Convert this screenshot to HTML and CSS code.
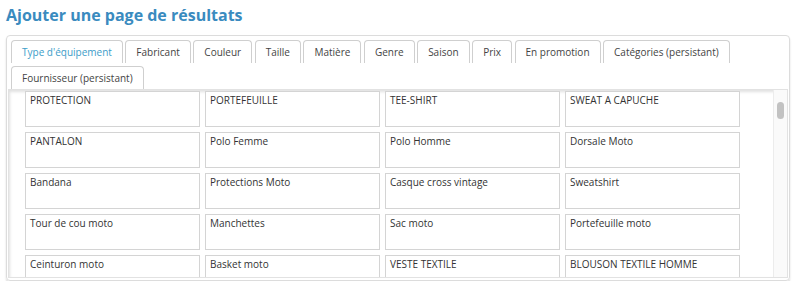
FILE: index.html
```html
<!DOCTYPE html>
<html lang="fr">

<head>
    <meta charset="UTF-8">
    <title>Ajouter une page de résultats</title>
    <link rel="stylesheet" href="styles.css">
</head>

<body>
    <h1 class="page-title">Ajouter une page de résultats</h1>

    <div class="panel">
        <ul class="tabs">
            <li class="tab active">Type d'équipement</li>
            <li class="tab">Fabricant</li>
            <li class="tab">Couleur</li>
            <li class="tab">Taille</li>
            <li class="tab">Matière</li>
            <li class="tab">Genre</li>
            <li class="tab">Saison</li>
            <li class="tab">Prix</li>
            <li class="tab">En promotion</li>
            <li class="tab">Catégories (persistant)</li>
            <li class="tab">Fournisseur (persistant)</li>
        </ul>

        <div class="tab-body">
            <div class="choices">
                <div class="choice">PROTECTION</div>
                <div class="choice">PORTEFEUILLE</div>
                <div class="choice">TEE-SHIRT</div>
                <div class="choice">SWEAT A CAPUCHE</div>

                <div class="choice">PANTALON</div>
                <div class="choice">Polo Femme</div>
                <div class="choice">Polo Homme</div>
                <div class="choice">Dorsale Moto</div>

                <div class="choice">Bandana</div>
                <div class="choice">Protections Moto</div>
                <div class="choice">Casque cross vintage</div>
                <div class="choice">Sweatshirt</div>

                <div class="choice">Tour de cou moto</div>
                <div class="choice">Manchettes</div>
                <div class="choice">Sac moto</div>
                <div class="choice">Portefeuille moto</div>

                <div class="choice">Ceinturon moto</div>
                <div class="choice">Basket moto</div>
                <div class="choice">VESTE TEXTILE</div>
                <div class="choice">BLOUSON TEXTILE HOMME</div>
            </div>
            <div class="scroll-track">
                <div class="scroll-thumb"></div>
            </div>
        </div>
    </div>
</body>

</html>
```

FILE: styles.css
```css
body {
    margin: 0;
    font-family: "Open Sans", "Liberation Sans", sans-serif;
    color: #333;
    background-color: #fff;
}

.page-title {
    margin: 0;
    padding: 4px 6px 0;
    height: 31px;
    font-size: 16px;
    line-height: 22px;
    font-weight: bold;
    color: #3a8bbf;
}

.panel {
    margin-left: 6px;
    width: 784px;
    height: 246px;
    border: 1px solid #dcdcdc;
    border-radius: 4px;
    box-shadow: 0 2px 2px rgba(0, 0, 0, 0.15);
    padding-top: 4px;
    box-sizing: border-box;
    display: flex;
    flex-direction: column;
}

.tabs {
    list-style: none;
    margin: 0;
    padding: 0 0 0 4px;
    display: flex;
    flex-wrap: wrap;
    column-gap: 2.5px;
    row-gap: 3px;
}

.tab {
    height: 23px;
    line-height: 22px;
    padding: 0 10px;
    font-size: 10px;
    color: #444;
    border: 1px solid #cfcfcf;
    border-bottom: none;
    border-radius: 4px 4px 0 0;
    box-sizing: border-box;
    background-color: #fff;
}

.tab.active {
    color: #3c9dc9;
}

.tab-body {
    flex: 1;
    margin: 0 1px 2px 1px;
    display: flex;
    border: 1px solid #e2e2e2;
    box-shadow: inset 1px 2px 3px rgba(0, 0, 0, 0.12);
    overflow: hidden;
}

.choices {
    flex: 1;
    display: grid;
    grid-template-columns: repeat(4, 175px);
    grid-auto-rows: 36px;
    gap: 5px;
    padding: 1px 0 0 16px;
    overflow: hidden;
}

.choice {
    border: 1px solid #d4d4d4;
    padding: 2px 4px 0;
    font-size: 10px;
    line-height: 13px;
    color: #333;
    background-color: #fff;
}

.scroll-track {
    width: 13px;
    border-left: 1px solid #ececec;
    background-color: #fafafa;
}

.scroll-thumb {
    margin: 12px auto 0;
    width: 7px;
    height: 17px;
    border-radius: 4px;
    background-color: #c2c2c2;
}
```
